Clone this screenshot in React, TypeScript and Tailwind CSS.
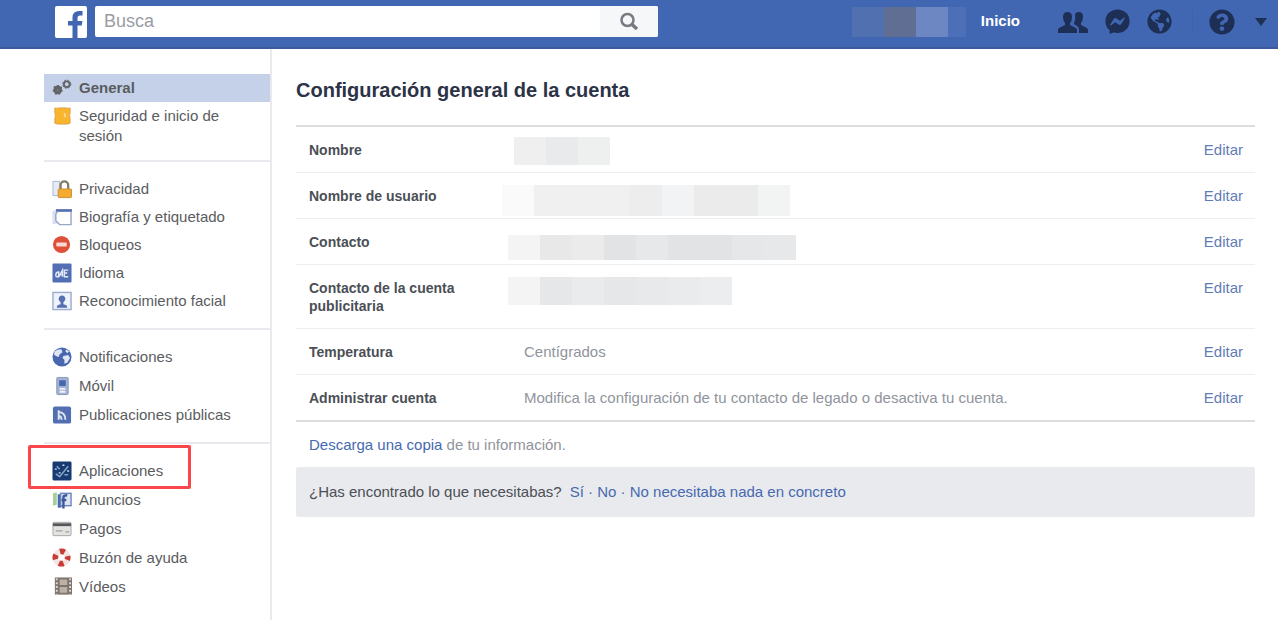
import clsx from 'clsx';
import { ReactNode } from 'react';
import { FaFacebookMessenger, FaGlobeAmericas, FaQuestionCircle } from 'react-icons/fa';

const ICONS: Record<string, ReactNode> = {
  general: (
    <g fill="none" stroke="#626468">
      <circle cx="6" cy="12" r="2.500" strokeWidth="4" />
      <circle cx="6" cy="12" r="4.500" strokeWidth="1.500" strokeDasharray="2 2" />
      <circle cx="15.500" cy="6" r="3" strokeWidth="2" />
      <circle cx="15.500" cy="6" r="4.300" strokeWidth="1" strokeDasharray="2 1.400" />
    </g>
  ),
  seguridad: (
    <>
      <path d="M3 1.500q2 1 4 0h8q2 1 4 0v5q-1 3 0 6v5q-2 1-4 1H7q-2 0-4-1v-5q1-3 0-6z" fill="#fab52f" stroke="#dda04a" />
      <path d="M13 7l1 4" stroke="#fbd793" strokeWidth="2" />
    </>
  ),
  privacidad: (
    <>
      <path d="M1 2h7v15H1z" fill="#e6ebf5" stroke="#a9b6d3" />
      <path d="M9 10V6a4 4 0 0 1 8 0v4" fill="none" stroke="#81796c" strokeWidth="2.400" />
      <rect x="6.500" y="10" width="14" height="9" rx="1" fill="#f5ac2e" stroke="#c78d34" />
    </>
  ),
  biografia: (
    <>
      <path d="M.5 3.500h5v14h-5z" fill="#d7e0f1" />
      <path d="M6 4h14v14H8l-4-4V7z" fill="#fff" stroke="#99a6c4" strokeWidth="1.500" />
      <path d="M4 3h17" stroke="#5470b3" strokeWidth="2.500" />
    </>
  ),
  bloqueos: (
    <>
      <circle cx="10" cy="9.500" r="9" fill="#df5038" />
      <rect x="4.500" y="7.500" width="11" height="4" rx="1" fill="#f8d9d4" />
    </>
  ),
  idioma: (
    <>
      <rect x=".5" y="0" width="20" height="20" rx="1" fill="#526fb4" />
      <path d="M4 12q0-3 3-3v5H5q-1 0-1-2M7 14l4-7v7M8 12h3M17 7h-4v7h4M13 10h3" fill="none" stroke="#e3e9f6" strokeWidth="1.500" />
    </>
  ),
  facial: (
    <>
      <rect x="1" y="1" width="19" height="18" fill="#eef2fa" stroke="#9eadcf" strokeWidth="1.500" />
      <path d="M5 17q0-3 4-3.500V11a3.500 3.500 0 1 1 3 0v2.500q4 .5 4 3.500z" fill="#5470b3" />
    </>
  ),
  notificaciones: (
    <>
      <circle cx="10.500" cy="10" r="10" fill="#4767af" />
      <path d="M3 4q4-3 7-2l1 3-3 2-1 3-3-1-2-2zM12 9l5-1 2 3-3 5-3 1v-4l-2-2zM15 2l3 2-2 2-2-2z" fill="#dfe6f4" />
    </>
  ),
  movil: (
    <>
      <rect x="5" y="1" width="12" height="18" rx="1" fill="#a4b2d2" stroke="#8797bb" />
      <rect x="7.500" y="4" width="7" height="6" fill="#4767af" />
      <path d="M8 13h6M8 16h6" stroke="#eef2fa" strokeWidth="2" />
    </>
  ),
  publicaciones: (
    <>
      <rect x="1" y="1" width="19" height="18" rx="2" fill="#536fb2" />
      <path d="M7 5v10M7 7q7 0 7 8M7 11q3 0 3 4" fill="none" stroke="#dfe6f4" strokeWidth="2" />
    </>
  ),
  aplicaciones: (
    <>
      <rect x=".5" y="0" width="20" height="20" rx="1.500" fill="#173a70" />
      <path d="M4 13l4 3 5-6 4-5M5 5l3 3M13 14h4" fill="none" stroke="#86a5cc" strokeWidth="1.600" />
      <path d="M3 8h2M11 4h2M16 10h2M7 12h2" stroke="#d6e1f1" strokeWidth="1.500" />
    </>
  ),
  anuncios: (
    <>
      <path d="M1 3l4-1v13l-4 1z" fill="#a4cf98" />
      <path d="M6 4h4v14H6z" fill="#4767af" />
      <rect x="9" y="3" width="11" height="13" fill="#dce4f3" stroke="#6c86bf" strokeWidth="1.500" />
      <path d="M12 19V7q0-2 4-2M10 10h5" fill="none" stroke="#3b5998" strokeWidth="2.500" />
    </>
  ),
  pagos: (
    <>
      <rect x="1" y="3" width="19" height="14" rx="1" fill="#e3e3e1" stroke="#a5a5a3" />
      <path d="M1 5.500h19" stroke="#55575b" strokeWidth="3" />
      <path d="M4 12h7M14 13h4" stroke="#a0a09e" strokeWidth="1.500" />
    </>
  ),
  ayuda: (
    <>
      <circle cx="10" cy="9.500" r="6.500" fill="none" stroke="#f0e5e3" strokeWidth="6" />
      <circle cx="10" cy="9.500" r="6.500" fill="none" stroke="#c93c36" strokeWidth="6" strokeDasharray="5.100 5.100" strokeDashoffset="2.500" />
    </>
  ),
  videos: (
    <>
      <rect x="3" y="0" width="18" height="18" fill="#7f746c" />
      <path d="M8 2h8v6H8zM8 10h8v6H8z" fill="#bbb1a8" />
      <path d="M5 1v17M19 1v17" stroke="#ded8d2" strokeWidth="2" strokeDasharray="2 2" />
    </>
  ),
};

type Item = { icon: string; label: string };

const GROUPS: { className: string; items: Item[] }[] = [
  {
    className: 'pb-2.5',
    items: [
      { icon: 'general', label: 'General' },
      { icon: 'seguridad', label: 'Seguridad e inicio de sesión' },
    ],
  },
  {
    className: 'border-t-2 py-[13px]',
    items: [
      { icon: 'privacidad', label: 'Privacidad' },
      { icon: 'biografia', label: 'Biografía y etiquetado' },
      { icon: 'bloqueos', label: 'Bloqueos' },
      { icon: 'idioma', label: 'Idioma' },
      { icon: 'facial', label: 'Reconocimiento facial' },
    ],
  },
  {
    className: 'border-t-2 py-[13px] gap-px',
    items: [
      { icon: 'notificaciones', label: 'Notificaciones' },
      { icon: 'movil', label: 'Móvil' },
      { icon: 'publicaciones', label: 'Publicaciones públicas' },
    ],
  },
  {
    className: 'border-t-2 py-[13px] gap-px',
    items: [
      { icon: 'aplicaciones', label: 'Aplicaciones' },
      { icon: 'anuncios', label: 'Anuncios' },
      { icon: 'pagos', label: 'Pagos' },
      { icon: 'ayuda', label: 'Buzón de ayuda' },
      { icon: 'videos', label: 'Vídeos' },
    ],
  },
];

type Row = { label: string; value?: string; mask?: { className: string; tones: string[] } };

const ROWS: Row[] = [
  { label: 'Nombre', mask: { className: 'left-[14px] top-[10px] h-7', tones: ['bg-[#efeff0]', 'bg-[#e9eaec]', 'bg-[#eeefef]'] } },
  {
    label: 'Nombre de usuario',
    mask: {
      className: 'left-[2px] top-3 h-[31px]',
      tones: ['bg-[#fafafa]', 'bg-[#f0f0f0]', 'bg-[#f0f0f0]', 'bg-[#f0f0f0]', 'bg-[#ededee]', 'bg-[#f2f3f5]', 'bg-[#ebebec]', 'bg-[#ebebec]', 'bg-[#f2f3f3]'],
    },
  },
  {
    label: 'Contacto',
    mask: {
      className: 'left-2 top-4 h-[25px]',
      tones: ['bg-[#f4f4f4]', 'bg-[#e8e8e9]', 'bg-[#ebebec]', 'bg-[#e2e3e5]', 'bg-[#e7e8e9]', 'bg-[#e2e3e5]', 'bg-[#e2e3e5]', 'bg-[#e6e7e8]', 'bg-[#e7e8e9]'],
    },
  },
  {
    label: 'Contacto de la cuenta publicitaria',
    mask: {
      className: 'left-2 top-3 h-7',
      tones: ['bg-[#f4f4f4]', 'bg-[#e6e7e8]', 'bg-[#eaebec]', 'bg-[#e6e7e8]', 'bg-[#e8e9ea]', 'bg-[#eaebec]', 'bg-[#ecedee]'],
    },
  },
  { label: 'Temperatura', value: 'Centígrados' },
  { label: 'Administrar cuenta', value: 'Modifica la configuración de tu contacto de legado o desactiva tu cuenta.' },
];

function TopBar() {
  return (
    <header className="flex h-[49px] items-center border-b-2 border-[#3b5b9d] bg-[#4267b2] pb-1 pl-[55px] pr-[11px]">
      <a href="#" aria-label="Facebook" className="shrink-0">
        <svg viewBox="0 0 32 32" className="h-8 w-8">
          <rect width="32" height="32" rx="2" fill="#fff" />
          <path d="M17.500 32V19.500h-4.500v-4.500h4.500v-3.500q0-6.500 6.500-6.500h3.500v4.500h-2.500q-2.500 0-2.500 2.500v3h5l-.8 4.500h-4.200V32z" fill="#4267b2" />
        </svg>
      </a>
      <form className="ml-2 flex h-[31px] min-w-0 max-w-[563px] flex-1 overflow-hidden rounded-xs bg-white">
        <input
          type="text"
          aria-label="Busca"
          placeholder="Busca"
          className="min-w-0 flex-1 px-[9px] text-[18px] outline-none placeholder:text-[#9a9da3]"
        />
        <button type="button" aria-label="Buscar" className="flex w-[58px] items-center justify-center bg-[#f6f7f9]">
          <svg viewBox="0 0 20 20" className="h-5 w-5" fill="none" stroke="#777a80">
            <circle cx="8.500" cy="8" r="6" strokeWidth="2.500" />
            <path d="M13 12.500l5 4.500" strokeWidth="3.500" />
          </svg>
        </button>
      </form>
      <nav className="ml-auto flex shrink-0 items-center">
        <span className="flex h-[30px]">
          <span className="w-8 bg-[#5070b0]" />
          <span className="w-8 bg-[#5f6e92]" />
          <span className="w-8 bg-[#6d87c3]" />
          <span className="w-[18px] bg-[#4c6fb8]" />
        </span>
        <a href="#" className="ml-[15px] text-[15px] font-bold text-white">Inicio</a>
        <div className="ml-[38px] flex items-center gap-[17px] text-[#1d2f55]">
          <button type="button" aria-label="Solicitudes de amistad">
            <svg viewBox="0 0 30 24" className="h-6 w-[30px]" fill="currentColor">
              <path d="M0 23v-3q0-2 3-3l4-2v-2Q5 11 5 7q0-5 4.500-5T14 7q0 4-2 6v2l4 2q3 1 3 3v3z" />
              <path d="M21 23h9v-3q0-2-3-3l-4-2v-2q2-2 2-6 0-5-4-5-3 0-4 2 1 5-1 9v1l3 2q2 1 2 4z" />
            </svg>
          </button>
          <button type="button" aria-label="Mensajes"><FaFacebookMessenger className="h-[25px] w-[25px]" /></button>
          <button type="button" aria-label="Notificaciones"><FaGlobeAmericas className="h-[25px] w-[25px]" /></button>
        </div>
        <div className="ml-5 flex items-center gap-5 border-l border-[#3f62aa] pl-4 text-[#1d2f55]">
          <button type="button" aria-label="Ayuda"><FaQuestionCircle className="h-[26px] w-[26px]" /></button>
          <button type="button" aria-label="Menú de la cuenta">
            <svg viewBox="0 0 12 8" className="h-2 w-3" fill="currentColor">
              <path d="M0 0h12L6 8z" />
            </svg>
          </button>
        </div>
      </nav>
    </header>
  );
}

function Sidebar() {
  return (
    <nav className="w-[272px] shrink-0 border-r-2 border-[#e9eaed] pl-11 pt-[25px]">
      {GROUPS.map((group, i) => (
        <ul key={i} className={clsx('flex flex-col border-[#e9eaed]', group.className)}>
          {group.items.map(({ icon, label }) => (
            <li key={label} className="relative">
              <a
                href="#"
                className={clsx(
                  'flex gap-[7px] py-1 pl-2 pr-7 text-[15px] leading-5 text-[#5a5c60]',
                  icon === 'general' && 'bg-[#c4d1e8] font-bold',
                )}
              >
                <svg viewBox="0 0 21 20" className="h-5 w-5 shrink-0">{ICONS[icon]}</svg>
                {label}
              </a>
              {icon === 'aplicaciones' && (
                <span className="pointer-events-none absolute -bottom-1 -left-4 -top-3 w-[163px] rounded-xs border-3 border-[#f9474c]" />
              )}
            </li>
          ))}
        </ul>
      ))}
    </nav>
  );
}

export default function App() {
  return (
    <div className="flex min-h-screen flex-col bg-white font-['Liberation_Sans',Arial,sans-serif]">
      <TopBar />
      <div className="flex flex-1">
        <Sidebar />
        <main className="min-w-0 flex-1 pb-8 pl-6 pr-[23px] pt-[27px] text-[15px] leading-[18px]">
          <h1 className="text-[20px] font-bold leading-7 text-[#2c3347]">Configuración general de la cuenta</h1>
          <table className="mt-[21px] w-full border-separate border-spacing-0 border-y-2 border-[#dcdddf] text-left">
            <tbody>
              {ROWS.map(({ label, value, mask }, i) => {
                const cell = clsx('pb-[13px] pt-3.5 align-top', i < ROWS.length - 1 && 'border-b border-[#eeeff1]');
                return (
                  <tr key={label}>
                    <th scope="row" className={clsx(cell, 'w-[204px] pl-[13px] pr-6 text-[14px] text-[#4b4f56]')}>{label}</th>
                    <td className={clsx(cell, 'relative pl-6 text-[#90949c]')}>
                      {value}
                      {mask && (
                        <span className={clsx('absolute flex', mask.className)}>
                          {mask.tones.map((tone, n) => (
                            <span key={n} className={clsx('w-8', tone)} />
                          ))}
                        </span>
                      )}
                    </td>
                    <td className={clsx(cell, 'w-20 pr-3 text-right')}>
                      <a href="#" className="text-[#5f7db5]">Editar</a>
                    </td>
                  </tr>
                );
              })}
            </tbody>
          </table>
          <p className="mt-3.5 pl-[13px] text-[#90949c]">
            <a href="#" className="text-[#4669b0]">Descarga una copia</a> de tu información.
          </p>
          <div className="mt-[13px] flex flex-wrap gap-x-2 rounded-xs bg-[#e9eaed] px-[13px] py-4 text-[#4b4f56]">
            <span>¿Has encontrado lo que necesitabas?</span>
            <span className="text-[#4669b0]">
              <a href="#">Sí</a> · <a href="#">No</a> · <a href="#">No necesitaba nada en concreto</a>
            </span>
          </div>
        </main>
      </div>
    </div>
  );
}
